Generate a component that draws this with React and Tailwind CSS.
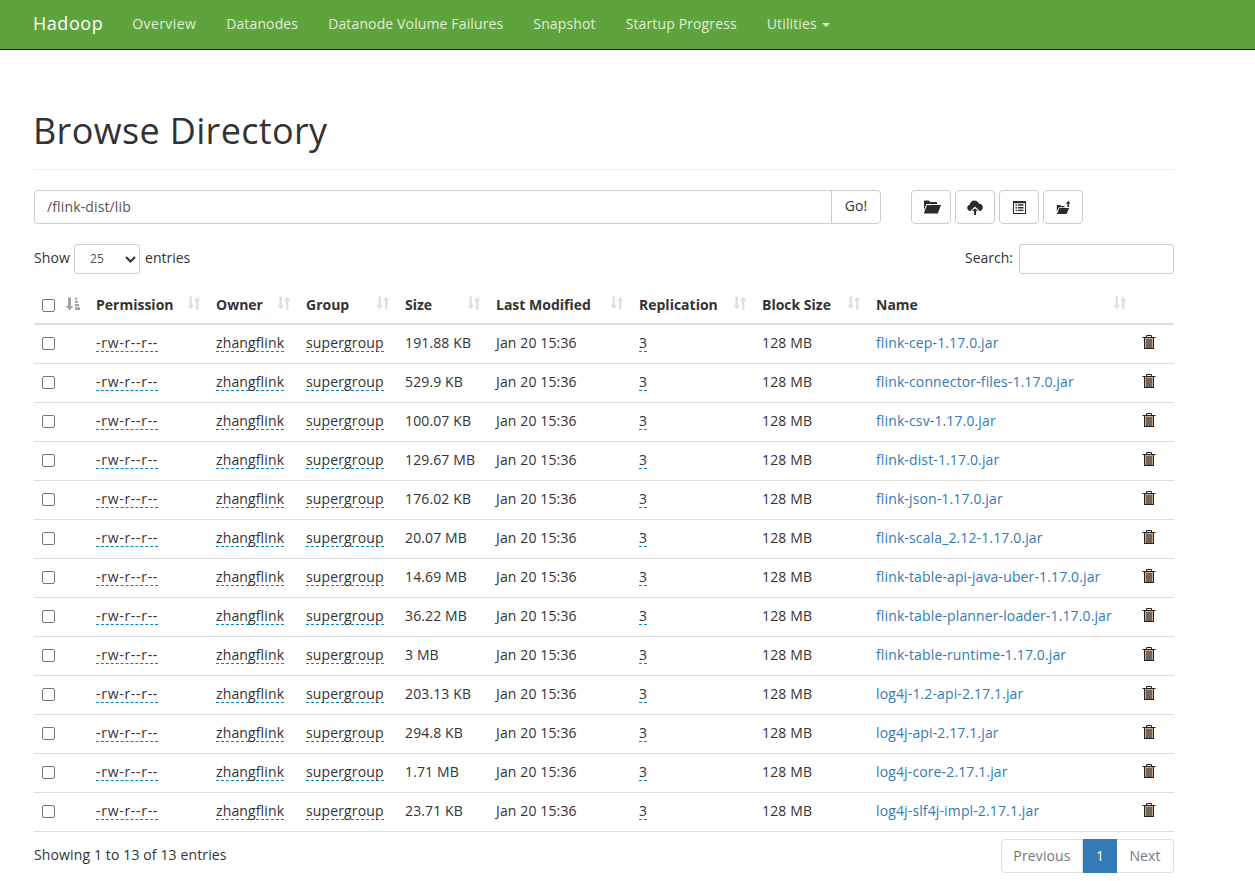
const ROWS = [
  ['191.88 KB', 'flink-cep-1.17.0.jar'],
  ['529.9 KB', 'flink-connector-files-1.17.0.jar'],
  ['100.07 KB', 'flink-csv-1.17.0.jar'],
  ['129.67 MB', 'flink-dist-1.17.0.jar'],
  ['176.02 KB', 'flink-json-1.17.0.jar'],
  ['20.07 MB', 'flink-scala_2.12-1.17.0.jar'],
  ['14.69 MB', 'flink-table-api-java-uber-1.17.0.jar'],
  ['36.22 MB', 'flink-table-planner-loader-1.17.0.jar'],
  ['3 MB', 'flink-table-runtime-1.17.0.jar'],
  ['203.13 KB', 'log4j-1.2-api-2.17.1.jar'],
  ['294.8 KB', 'log4j-api-2.17.1.jar'],
  ['1.71 MB', 'log4j-core-2.17.1.jar'],
  ['23.71 KB', 'log4j-slf4j-impl-2.17.1.jar'],
]

const NAV = ['Datanodes', 'Datanode Volume Failures', 'Snapshot', 'Startup Progress']

const COLUMNS = [
  { label: 'Permission', width: 'w-[120px]' },
  { label: 'Owner', width: 'w-[90px]' },
  { label: 'Group', width: 'w-[99px]' },
  { label: 'Size', width: 'w-[91px]' },
  { label: 'Last Modified', width: 'w-[143px]' },
  { label: 'Replication', width: 'w-[123px]' },
  { label: 'Block Size', width: 'w-[114px]' },
  { label: 'Name', width: 'w-[266px]' },
]

function FolderOpen() {
  return (
    <svg width="18" height="14" viewBox="0 0 18 14" fill="#2b2b2b" className="ml-px">
      <path d="M1 0.5h5l1 1.5h7v2H3.4L1 10z" />
      <path d="M4 5h14l-3.2 8.5H0.8z" />
    </svg>
  )
}

function CloudUpload() {
  return (
    <svg width="16" height="15" viewBox="0 0 16 15" fill="#2b2b2b">
      <path d="M3.4 11C1.5 11 0.2 9.6 0.2 7.8c0-1.5 1-2.7 2.4-3C3 2.3 5 0.5 7.4 0.5c2.2 0 3.9 1.3 4.6 3.3 2.2 0 3.8 1.7 3.8 3.6 0 1.9-1.4 3.6-3.4 3.6z" />
      <path d="M8 6.6l4.6 4.4h-2.9v4h-3.4v-4H3.4z" fill="#fff" />
      <path d="M8 8.2l3 2.8H9v4H7v-4H5z" />
    </svg>
  )
}

function ListAlt() {
  return (
    <svg width="13" height="13" viewBox="0 0 13 13">
      <rect x="0.5" y="0.5" width="12" height="12" fill="#fff" stroke="#2b2b2b" />
      <path d="M1 1h11v1.2H1zM2.5 3.3h1.5v1.4H2.5zM2.5 6h1.5v1.4H2.5zM2.5 8.7h1.5v1.4H2.5zM5 3.3h5.5v1.4H5zM5 6h5.5v1.4H5zM5 8.7h5.5v1.4H5z" fill="#2b2b2b" />
    </svg>
  )
}

function FolderUp() {
  return (
    <svg width="15" height="13" viewBox="0 0 15 13" fill="#2b2b2b">
      <path d="M0.8 4h3.4l0.8 1h3.5v1.3H3L0.8 10.5z" />
      <path d="M3.4 7h9.8l-2.6 6H0.9z" />
      <path d="M12.2 0l2.4 2.6H13V6h-1.6V2.6H9.8z" />
    </svg>
  )
}

function Trash() {
  return (
    <svg width="14" height="14" viewBox="0 0 14 14" fill="none" className="block">
      <path d="M4.5 2V0.5h5V2" stroke="#222" />
      <path d="M0.5 2.5h13" stroke="#222" />
      <path d="M2 3h10v10.5H2z" fill="#c9a98c" />
      <path d="M2.5 3v10.5h9V3M2 13.5h10M5 4v9M7 4v9M9 4v9" stroke="#222" />
    </svg>
  )
}

function SortIcon({ active }) {
  return (
    <svg width={active ? 16 : 14} height="14" viewBox={active ? '0 0 16 14' : '0 0 14 14'} fill={active ? '#a3a3a3' : '#e0e0e0'}>
      {active ? (
        <>
          <path d="M3 0.5h3v8.5h2.2L4.5 13.5 0.8 9H3z" />
          <path d="M10 0.5h2v2.2h-2zM10 3.7h3v2.2h-3zM10 7h4v2.2h-4zM10 10.3h5v2.7h-5z" />
        </>
      ) : (
        <>
          <path d="M2.5 0.5h2.5v8.5h2L3.7 13.5 0.5 9h2z" />
          <path d="M10.3 0.5l3.2 4.5h-2v8.5H9V5H7z" />
        </>
      )}
    </svg>
  )
}

function Dotted({ children, wide }) {
  return (
    <span className={`border-b border-dashed border-[#08c] leading-[16px] inline-block ${wide ? 'tracking-[0.7px]' : ''}`}>
      {children}
    </span>
  )
}

function Checkbox() {
  return <input type="checkbox" className="block w-[13px] h-[13px] ml-2 appearance-none rounded-[2px] border border-[#767676] bg-white" />
}

function IconButton({ children }) {
  return (
    <button className="w-10 h-[34px] flex items-center justify-center bg-white border border-[#ccc] rounded">
      {children}
    </button>
  )
}

export default function App() {
  return (
    <div className="min-h-screen bg-white text-[#333] text-sm tracking-[0.13px] font-['Open_Sans','Noto_Sans',sans-serif]">
      <nav className="h-[50px] flex bg-[#5fa33e] border-b border-[#1a1a1a] pl-[33px]">
        <a className="text-white text-lg tracking-[0.55px] leading-[47px] mr-[29px]">Hadoop</a>
        <ul className="flex gap-[30px]">
          <li className="leading-[47px] text-[#dff0d8] tracking-[0.4px]">Overview</li>
          {NAV.map((n) => (
            <li key={n} className="leading-[47px] text-[#dff0d8]">{n}</li>
          ))}
          <li className="leading-[47px] text-[#dff0d8] flex items-center gap-[5px] pb-[2px]">
            Utilities
            <span className="w-0 h-0 mt-[2px] border-x-4 border-x-transparent border-t-4 border-t-[#dff0d8]" />
          </li>
        </ul>
      </nav>

      <main className="px-[34px] w-[1208px]">
        <div className="mt-[59px] pb-[17px] border-b border-[#eee]">
          <h1 className="text-4xl leading-[43px] tracking-[0.35px] -ml-px">Browse Directory</h1>
        </div>

        <div className="mt-5 flex">
          <div className="flex w-[847px]">
            <input
              defaultValue="/flink-dist/lib"
              className="flex-1 h-[34px] px-3 pb-[2px] border border-[#ccc] rounded-l text-[#555] outline-none"
            />
            <button className="w-[50px] h-[34px] pb-[2px] -ml-px border border-[#ccc] rounded-r bg-white">Go!</button>
          </div>
          <div className="ml-[30px] flex gap-1">
            <IconButton><FolderOpen /></IconButton>
            <IconButton><CloudUpload /></IconButton>
            <IconButton><ListAlt /></IconButton>
            <IconButton><FolderUp /></IconButton>
          </div>
        </div>

        <div className="mt-5 flex justify-between items-center h-[30px]">
          <div className="flex items-center gap-1 pb-[2px]">
            Show
            <div className="relative mt-[2px]">
              <select className="block w-[66px] h-[30px] pl-[15px] text-xs appearance-none border border-[#ccc] rounded-[3px] bg-white text-[#555]">
                <option>25</option>
              </select>
              <svg className="absolute right-[4px] top-[12px]" width="11" height="7" viewBox="0 0 11 7" fill="none" stroke="#333" strokeWidth="2">
                <path d="M1 1l4.5 4.5L10 1" />
              </svg>
            </div>
            <span className="ml-px tracking-normal">entries</span>
          </div>
          <div className="flex items-center gap-[6px]">
            <span className="pb-[2px] tracking-normal">Search:</span>
            <input className="w-[155px] h-[30px] border border-[#ccc] rounded-[3px] outline-none" />
          </div>
        </div>

        <table className="mt-[13px] w-[1140px] table-fixed border-collapse">
          <thead>
            <tr className="h-[37px] border-b-2 border-[#ddd]">
              <th className="w-[54px] p-0 align-middle">
                <div className="flex items-center">
                  <Checkbox />
                  <span className="ml-[10px] mb-[2px]"><SortIcon active /></span>
                </div>
              </th>
              {COLUMNS.map((c) => (
                <th key={c.label} className={`${c.width} px-2 pt-0 pb-[1px] text-left font-bold tracking-normal relative`}>
                  {c.label}
                  <span className="absolute right-[7px] top-[9px]"><SortIcon /></span>
                </th>
              ))}
              <th className="w-10 p-0" />
            </tr>
          </thead>
          <tbody>
            {ROWS.map(([size, name]) => (
              <tr key={name} className="h-[39px] border-b border-[#ddd]">
                <td className="p-0"><Checkbox /></td>
                <td className="px-2 pt-0 pb-[2px]"><Dotted wide>-rw-r--r--</Dotted></td>
                <td className="px-2 pt-0 pb-[2px]"><Dotted>zhangflink</Dotted></td>
                <td className="px-2 pt-0 pb-[2px]"><Dotted>supergroup</Dotted></td>
                <td className="px-2 pt-0 pb-[2px]">{size}</td>
                <td className="px-2 pt-0 pb-[2px]">Jan 20 15:36</td>
                <td className="px-2 pt-0 pb-[2px]"><Dotted>3</Dotted></td>
                <td className="px-2 pt-0 pb-[2px]">128 MB</td>
                <td className="px-2 pt-0 pb-[2px] whitespace-nowrap text-[#337ab7]">{name}</td>
                <td className="px-2 pt-0 pb-[3px]"><Trash /></td>
              </tr>
            ))}
          </tbody>
        </table>

        <div className="mt-[7px] flex justify-between items-start">
          <div className="mt-[6px]">Showing 1 to 13 of 13 entries</div>
          <div className="flex h-[34px] leading-[31px] text-[#777] text-center">
            <span className="w-[82px] border border-[#ddd] rounded-l">Previous</span>
            <span className="w-[34px] bg-[#337ab7] text-white leading-[33px]">1</span>
            <span className="w-[57px] border border-l-0 border-[#ddd] rounded-r">Next</span>
          </div>
        </div>
      </main>
    </div>
  )
}
